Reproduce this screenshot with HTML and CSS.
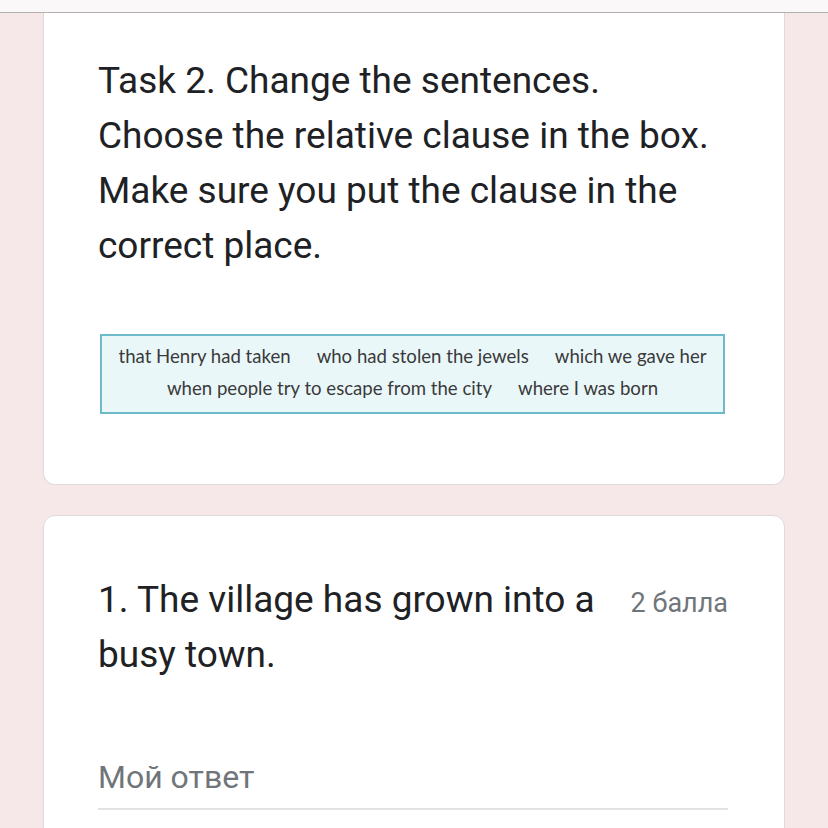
FILE: index.html
```html
<!DOCTYPE html>
<html lang="ru">
<head>
  <meta charset="UTF-8">
  <title>Task 2</title>
  <link rel="stylesheet" href="styles.css">
</head>
<body>
  <div class="topbar"></div>

  <div class="page">
    <div class="card card-first">
      <div class="task-title">Task 2. Change the sentences.
Choose the relative clause in the box.
Make sure you put the clause in the correct place.</div>
      <div class="clause-box">
        <div class="clause-row">
          <span>that Henry had taken</span>
          <span>who had stolen the jewels</span>
          <span>which we gave her</span>
        </div>
        <div class="clause-row">
          <span>when people try to escape from the city</span>
          <span>where I was born</span>
        </div>
      </div>
    </div>

    <div class="card">
      <div class="question">
        <div class="question-text">1. The village has grown into a busy town.</div>
        <div class="points">2 балла</div>
      </div>
      <div class="answer">Мой ответ</div>
    </div>
  </div>
</body>
</html>
```

FILE: styles.css
```css
body {
  margin: 0;
  background: #f6e8e8;
  font-family: Roboto, "Noto Sans", sans-serif;
  color: #202124;
}
.topbar {
  height: 12px;
  background: #faf8f8;
  border-bottom: 1px solid #b4b0b0;
}
.page {
  padding: 0 43px;
  display: flex;
  flex-direction: column;
  gap: 30px;
}
.card {
  background: #fff;
  border: 1px solid #dedada;
  border-radius: 12px;
  padding: 56px 56px 40px 54px;
}
.card-first {
  border-top: none;
  border-radius: 0 0 12px 12px;
  padding-top: 40px;
  padding-bottom: 70px;
}
.task-title {
  font-size: 37px;
  line-height: 55px;
  white-space: pre-line;
}
.clause-box {
  margin-top: 61px;
  margin-left: 2px;
  margin-right: 3px;
  border: 2px solid #6dbac8;
  background: #eaf7f9;
  padding: 4px 10px 8px;
  font-family: Lato, "DejaVu Sans", sans-serif;
  font-size: 18.6px;
  color: #3a3a3a;
}
.clause-row {
  display: flex;
  justify-content: center;
  gap: 26px;
  line-height: 32px;
}
.question {
  display: flex;
  align-items: baseline;
  gap: 30px;
}
.question-text {
  flex: 1;
  font-size: 37px;
  line-height: 55px;
}
.points {
  flex-shrink: 0;
  font-size: 27px;
  color: #70757a;
  white-space: nowrap;
}
.answer {
  margin-top: 76px;
  font-size: 32px;
  color: #70757a;
  padding-bottom: 12px;
  border-bottom: 2px solid #e2e2e2;
}
```
